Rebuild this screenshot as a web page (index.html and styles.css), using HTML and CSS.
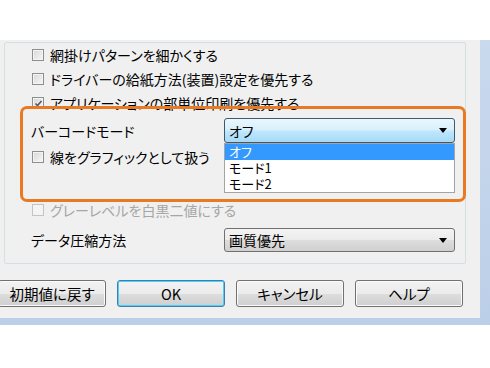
FILE: index.html
```html
<!DOCTYPE html>
<html lang="ja">
<head>
    <meta charset="UTF-8">
    <title>印刷設定</title>
    <link rel="stylesheet" href="styles.css">
</head>
<body>
    <div class="frame">
        <div class="client">
            <div class="group">
                <div class="row">
                    <span class="check"></span>
                    <span>網掛けパターンを細かくする</span>
                </div>
                <div class="row">
                    <span class="check"></span>
                    <span>ドライバーの給紙方法(装置)設定を優先する</span>
                </div>
                <div class="row">
                    <span class="check checked">
                        <svg width="9" height="9" viewBox="0 0 9 9"><path d="M1.5 4.5 L3.5 6.5 L7.5 2" fill="none" stroke="#4a5a6a" stroke-width="1.6"/></svg>
                    </span>
                    <span>アプリケーションの部単位印刷を優先する</span>
                </div>
                <div class="row combo-row barcode">
                    <span class="label">バーコードモード</span>
                    <div class="combo combo-open">
                        <span>オフ</span>
                        <span class="arrow"></span>
                        <ul class="droplist">
                            <li class="sel">オフ</li>
                            <li>モード1</li>
                            <li>モード2</li>
                        </ul>
                    </div>
                </div>
                <div class="row line-row">
                    <span class="check"></span>
                    <span>線をグラフィックとして扱う</span>
                </div>
                <div class="row gray-row disabled">
                    <span class="check"></span>
                    <span>グレーレベルを白黒二値にする</span>
                </div>
                <div class="row combo-row compress">
                    <span class="label">データ圧縮方法</span>
                    <div class="combo">
                        <span>画質優先</span>
                        <span class="arrow"></span>
                    </div>
                </div>
            </div>

            <div class="buttons">
                <button class="btn">初期値に戻す</button>
                <button class="btn default">OK</button>
                <button class="btn">キャンセル</button>
                <button class="btn">ヘルプ</button>
            </div>
        </div>

        <div class="highlight"></div>
    </div>
</body>
</html>
```

FILE: styles.css
```css
* {
    margin: 0;
    padding: 0;
    box-sizing: border-box;
}

body {
    background-color: #fff;
    font-family: "Noto Sans CJK JP", sans-serif;
    font-size: 14px;
    font-feature-settings: "palt";
    color: #000;
    overflow: hidden;
}

/* window frame */
.frame {
    position: relative;
    margin-top: 40px;
    height: 285px;
    background: linear-gradient(#c9d9ee, #bccfe8);
    padding: 0 10px 7px 0;
}

.client {
    height: 278px;
    background-color: #f0f0f0;
    padding: 2px 14px 0 4px;
}

/* group box */
.group {
    border: 1px solid #d5dfe5;
    border-radius: 2px;
    padding: 0 10px 11px 26px;
}

.row {
    height: 24px;
    display: flex;
    align-items: center;
    white-space: nowrap;
}

.check {
    width: 12px;
    height: 12px;
    margin: 0 6px 0 1px;
    border: 1px solid #8e8f8f;
    background: linear-gradient(135deg, #d6d6d6, #f8f8f8);
    box-shadow: inset 0 0 0 1px #f4f4f4;
    display: flex;
    align-items: center;
    justify-content: center;
    flex-shrink: 0;
}

.check svg {
    display: block;
}

.disabled {
    color: #a6a6a6;
}

.disabled .check {
    border-color: #c4c4c4;
    background: #f4f4f4;
}

.combo-row {
    height: 25px;
}

.barcode {
    margin-top: 3px;
}

.line-row {
    margin-top: 2px;
}

.gray-row {
    margin-top: 29px;
}

.compress {
    margin-top: 6px;
    height: 24px;
}

/* combo boxes */
.combo {
    position: relative;
    margin-left: auto;
    width: 231px;
    height: 100%;
    border: 1px solid #707070;
    border-radius: 3px;
    background: linear-gradient(#f3f3f3 0%, #ebebeb 50%, #dddddd 51%, #d0d0d0 100%);
    display: flex;
    align-items: center;
    padding: 0 7px 0 4px;
}

.combo-open {
    border-color: #3c5a70;
    background: linear-gradient(#eaf6fd 0%, #d9f0fc 45%, #bee6fd 55%, #a7d9f5 100%);
}

.arrow {
    margin-left: auto;
    width: 0;
    height: 0;
    border-left: 4.5px solid transparent;
    border-right: 4.5px solid transparent;
    border-top: 5px solid #000;
}

.droplist {
    position: absolute;
    top: 24px;
    left: -1px;
    width: 231px;
    height: 50px;
    list-style: none;
    background-color: #fff;
    border: 1px solid #a4a4a4;
    z-index: 2;
}

.droplist li {
    height: 16px;
    line-height: 16px;
    padding-left: 4px;
    font-size: 13px;
}

.droplist li.sel {
    background-color: #3399ff;
    color: #fff;
}

/* buttons */
.buttons {
    display: flex;
    gap: 11px;
    margin: 16px 0 0 -6px;
}

.btn {
    width: 108px;
    height: 27px;
    border: 1px solid #707070;
    border-radius: 3px;
    background: linear-gradient(#f2f2f2 0%, #ebebeb 50%, #dddddd 51%, #cfcfcf 100%);
    box-shadow: inset 0 0 0 1px #fbfbfb;
    font-family: "Noto Sans CJK JP", sans-serif;
    font-size: 14.5px;
    font-feature-settings: "palt";
    color: #000;
}

.btn.default {
    border-color: #3c7fb1;
    box-shadow: inset 0 0 0 1px #48d0f7;
}

/* orange annotation box */
.highlight {
    position: absolute;
    left: 20px;
    top: 66px;
    width: 446px;
    height: 96px;
    border: 3px solid #ea7a22;
    border-radius: 7px;
    z-index: 3;
}
```
